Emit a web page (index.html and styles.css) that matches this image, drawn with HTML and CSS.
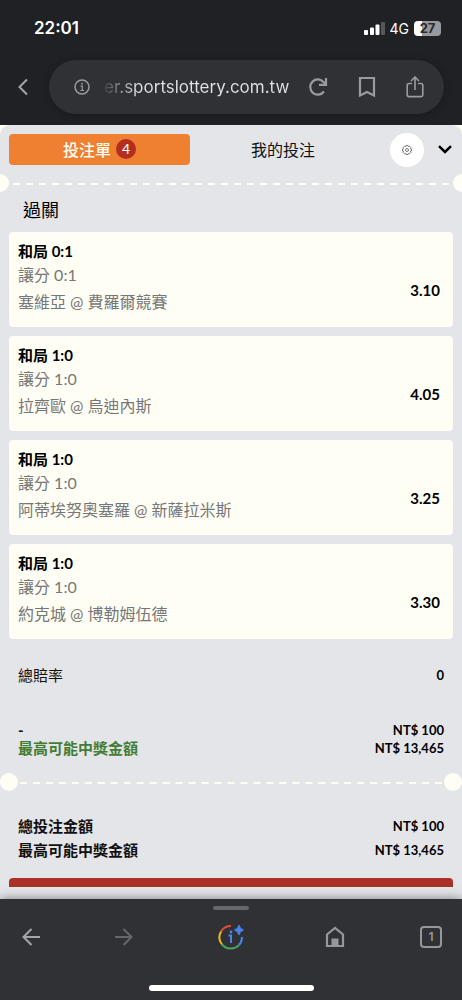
FILE: index.html
```html
<!DOCTYPE html>
<html lang="zh-Hant">
<head>
<meta charset="utf-8">
<meta name="viewport" content="width=device-width, initial-scale=1">
<title>投注單</title>
<link rel="stylesheet" href="styles.css">
</head>
<body>
<header class="browser-top">
  <div class="status">
    <span class="clock">22:01</span>
    <div class="status-right">
      <svg width="22" height="14" viewBox="0 0 22 14" aria-hidden="true"><g fill="#fff"><rect x="1" y="9" width="4" height="5" rx="1"/><rect x="7" y="6.500" width="4" height="7.500" rx="1"/><rect x="12.500" y="3.500" width="4" height="10.500" rx="1"/></g><rect x="18" y="1" width="4" height="13" rx="1" fill="#56575b"/></svg>
      <span class="network">4G</span>
      <span class="battery">27</span>
    </div>
  </div>
  <div class="address-row">
    <button class="icon-btn back" aria-label="返回"><svg width="12" height="18" viewBox="0 0 12 18"><path d="M10 1.500 2.500 9l7.500 7.500" fill="none" stroke="#a4a5aa" stroke-width="2"/></svg></button>
    <div class="address">
      <svg class="info" width="16" height="16" viewBox="0 0 16 16" aria-hidden="true"><circle cx="8" cy="8" r="7" fill="none" stroke="#9a9ba1" stroke-width="1.500"/><path d="M6.500 7.200H8.300v4.300M6.300 11.500h3.800" fill="none" stroke="#9a9ba1" stroke-width="1.200"/><circle cx="8" cy="4.700" r=".9" fill="#9a9ba1"/></svg>
      <span class="url">er.sportslottery.com.tw</span>
      <div class="address-actions">
        <button class="icon-btn" aria-label="重新整理"><svg width="20" height="20" viewBox="0 0 20 20"><path d="M16 14.500a7.600 7.600 0 1 1-.3-9.300L18 7.500" fill="none" stroke="#9a9ba1" stroke-width="2.200"/><path d="M18 1v6.800h-7" fill="none" stroke="#9a9ba1" stroke-width="2.200"/></svg></button>
        <button class="icon-btn" aria-label="書籤"><svg width="18" height="22" viewBox="0 0 18 22"><path d="M2 2h14v17.500l-7-3.500-7 3.500z" fill="none" stroke="#9a9ba1" stroke-width="2.200"/></svg></button>
        <button class="icon-btn" aria-label="分享"><svg width="18" height="22" viewBox="0 0 18 22"><path d="M6 7.500H3A1.800 1.800 0 0 0 1.200 9.300v9.500A1.800 1.800 0 0 0 3 20.600h12a1.800 1.800 0 0 0 1.800-1.800V9.300A1.800 1.800 0 0 0 15 7.500h-3M9 14V1.500M5 5l4-4 4 4" fill="none" stroke="#9a9ba1" stroke-width="1.600"/></svg></button>
      </div>
    </div>
  </div>
</header>

<main class="page">
  <div class="slip">
    <nav class="tabs">
      <button class="tab active">投注單<span class="count">4</span></button>
      <button class="tab">我的投注</button>
      <button class="settings" aria-label="設定"><svg width="10" height="10" viewBox="0 0 20 20"><g fill="none" stroke="#555" stroke-width="1.500"><path d="M8 1h4l.6 2.400 2.300-1.200 2.900 2.900-1.200 2.300L19 8v4l-2.400.6 1.200 2.300-2.900 2.900-2.300-1.200L12 19H8l-.6-2.400-2.300 1.200-2.900-2.900 1.200-2.300L1 12V8l2.400-.6-1.200-2.300 2.900-2.900 2.300 1.200z"/><circle cx="10" cy="10" r="3"/></g></svg></button>
      <button class="collapse" aria-label="收合"><svg width="14" height="9" viewBox="0 0 14 9"><path d="M1 1.200 7 7l6-5.800" fill="none" stroke="#000" stroke-width="2.500"/></svg></button>
    </nav>
    <div class="tear tear-edge"></div>
    <h1 class="title">過關</h1>
    <ul class="bets">
      <li class="bet"><div><h2>和局 0:1</h2><p class="market">讓分 0:1</p><p class="match">塞維亞 @ 費羅爾競賽</p></div><strong class="odds">3.10</strong></li>
      <li class="bet"><div><h2>和局 1:0</h2><p class="market">讓分 1:0</p><p class="match">拉齊歐 @ 烏迪內斯</p></div><strong class="odds">4.05</strong></li>
      <li class="bet"><div><h2>和局 1:0</h2><p class="market">讓分 1:0</p><p class="match">阿蒂埃努奧塞羅 @ 新薩拉米斯</p></div><strong class="odds">3.25</strong></li>
      <li class="bet"><div><h2>和局 1:0</h2><p class="market">讓分 1:0</p><p class="match">約克城 @ 博勒姆伍德</p></div><strong class="odds">3.30</strong></li>
    </ul>
    <dl class="sums">
      <div class="sum total-odds"><dt>總賠率</dt><dd>0</dd></div>
      <div class="sum stake"><dt>-</dt><dd>NT$ 100</dd></div>
      <div class="sum stake win"><dt>最高可能中獎金額</dt><dd>NT$ 13,465</dd></div>
    </dl>
    <div class="tear"></div>
    <dl class="sums totals">
      <div class="sum"><dt>總投注金額</dt><dd>NT$ 100</dd></div>
      <div class="sum"><dt>最高可能中獎金額</dt><dd>NT$ 13,465</dd></div>
    </dl>
    <div class="submit"></div>
  </div>
</main>

<footer class="browser-bottom">
  <div class="grip"></div>
  <nav class="tools">
    <button class="icon-btn" aria-label="上一頁"><svg width="18" height="18" viewBox="0 0 18 18"><path d="M18 9H2M9.500 1 1.500 9l8 8" fill="none" stroke="#a4a5aa" stroke-width="2"/></svg></button>
    <button class="icon-btn" aria-label="下一頁"><svg width="18" height="18" viewBox="0 0 18 18"><path d="M0 9h16M8.500 1l8 8-8 8" fill="none" stroke="#66676c" stroke-width="2"/></svg></button>
    <button class="icon-btn lens" aria-label="搜尋"><svg width="28" height="26" viewBox="0 0 28 26"><g fill="none" stroke-width="2"><path d="M4.100 7.500A11.500 11.500 0 0 1 14 2" stroke="#e34b3c"/><path d="M5 20.500A11.500 11.500 0 0 1 4.100 7.500" stroke="#f4bd24"/><path d="M22 21A11.500 11.500 0 0 1 5 20.500" stroke="#4ba558"/><path d="M25 13a11.500 11.500 0 0 1-3 8" stroke="#4b83ee"/><path d="M11.500 11.500h2.500V19" stroke="#4b83ee"/></g><circle cx="14" cy="8" r="1.400" fill="#4b83ee"/><path d="M22 1q.8 4 4.500 5-3.700 1-4.500 5-.8-4-4.500-5 3.700-1 4.500-5z" fill="#4b83ee" stroke="#4b83ee"/></svg></button>
    <button class="icon-btn" aria-label="首頁"><svg width="20" height="22" viewBox="0 0 20 22"><path d="M2 8.500 10 2l8 6.500V20H2z" fill="none" stroke="#96979d" stroke-width="2.200"/><path d="M6.500 20v-7.500h7V20z" fill="#96979d"/></svg></button>
    <button class="tab-count" aria-label="分頁">1</button>
  </nav>
  <div class="home-bar"></div>
</footer>
</body>
</html>
```
FILE: styles.css
```css
* {
  box-sizing: border-box;
  margin: 0;
  padding: 0;
}

body {
  min-height: 100vh;
  display: flex;
  flex-direction: column;
  background: #202125;
  color: #111;
  font-family: Lato, "Noto Sans CJK TC", sans-serif;
  font-size: 16px;
}

button {
  border: 0;
  background: none;
  font: inherit;
  color: inherit;
}

svg {
  display: block;
}

.browser-top {
  height: 125px;
  padding: 16px 18px 0 17px;
  background: #202125;
  font-family: Inter, sans-serif;
}

.status {
  display: flex;
  justify-content: space-between;
  align-items: center;
  height: 24px;
  padding: 0 3px 0 17px;
  color: #fff;
}

.clock {
  font-size: 17px;
  font-weight: 600;
}

.status-right {
  display: flex;
  align-items: center;
  gap: 5px;
}

.network {
  font-size: 14px;
}

.battery {
  width: 27px;
  height: 15px;
  border-radius: 4px;
  background: linear-gradient(90deg, #fff 8px, #98999d 8px);
  color: #292a2e;
  font-size: 13px;
  font-weight: 700;
  line-height: 15px;
  text-align: center;
}

.address-row {
  display: flex;
  align-items: center;
  gap: 20px;
  margin-top: 20px;
}

.address {
  flex: 1;
  min-width: 0;
  height: 54px;
  padding: 0 20px 0 25px;
  display: flex;
  align-items: center;
  gap: 14px;
  border-radius: 27px;
  background: #303135;
  box-shadow: 0 1px 6px #18191c;
}

.info {
  flex: none;
}

.url {
  font-size: 17px;
  white-space: nowrap;
  color: transparent;
  background: linear-gradient(90deg, #404145, #e2e3e6 34px);
  background-clip: text;
}

.address-actions {
  flex: 1;
  display: flex;
  align-items: center;
  justify-content: flex-end;
  gap: 30px;
}

.page {
  flex: 1;
  display: flex;
  background: #fefef4;
}

.slip {
  flex: 1;
  min-width: 0;
  border-radius: 10px 10px 0 0;
  background: #e4e5e8;
  overflow: hidden;
}

.tabs {
  display: grid;
  grid-template-columns: 181fr 186fr 48px 28px;
  align-items: center;
  justify-items: end;
  height: 49px;
  padding: 0 10px 0 9px;
}

.tab {
  width: 100%;
  height: 31px;
  padding-bottom: 1px;
  display: flex;
  align-items: center;
  justify-content: center;
  gap: 5px;
  border-radius: 4px;
}

.tab.active {
  background: #ef8031;
  color: #fefef4;
  font-weight: 500;
}

.count {
  width: 20px;
  height: 20px;
  border-radius: 50%;
  background: #b52d20;
  font-size: 14px;
  line-height: 20px;
  text-align: center;
}

.settings {
  width: 34px;
  height: 34px;
  display: grid;
  place-items: center;
  border-radius: 50%;
  background: #fff;
}

.tear {
  display: flex;
  align-items: center;
  justify-content: space-between;
  height: 18px;
  padding: 0 14px 0 20px;
  background: linear-gradient(90deg, #fefef4 7px, transparent 7px) 0 9px / 13px 2px round no-repeat;
  background-origin: content-box;
  background-clip: content-box;
}

.tear::before,
.tear::after {
  content: "";
  flex: none;
  width: 18px;
  height: 18px;
  border-radius: 50%;
  background: #fefef4;
}

.tear::before {
  margin-left: -20px;
}

.tear::after {
  margin-right: -14px;
}

.tear-edge {
  padding: 0 7px 0 13px;
}

.tear-edge::before {
  margin-left: -22px;
}

.tear-edge::after {
  margin-right: -16px;
}

.title {
  padding: 4px 23px 0;
  font-size: 18px;
  font-weight: 400;
  line-height: 28px;
  color: #000;
}

.bets {
  display: grid;
  gap: 9px;
  padding: 8px 9px 0;
  list-style: none;
}

.bet {
  display: flex;
  justify-content: space-between;
  align-items: center;
  min-height: 95px;
  padding: 8px 13px 13px 9px;
  border-radius: 4px;
  background: #fefef4;
}

.bet h2 {
  font-size: 15px;
  font-weight: 700;
  line-height: 23px;
  color: #000;
}

.market,
.match {
  color: #777;
  font-weight: 400;
  line-height: 24px;
}

.match {
  margin-top: 3px;
}

.odds {
  padding-top: 26px;
  font-size: 15px;
  font-weight: 700;
  line-height: 20px;
  color: #000;
}

.sums {
  padding: 0 18px;
}

.sum {
  display: flex;
  justify-content: space-between;
  align-items: center;
  line-height: 24px;
}

.sum dt {
  font-size: 15px;
  font-weight: 700;
}

.sum dd {
  font-size: 13px;
  font-weight: 700;
  color: #000;
}

.total-odds {
  margin: 24px 0 34px;
}

.total-odds dt {
  font-weight: 400;
}

.stake {
  line-height: 18px;
}

.win dt {
  color: #437c33;
}

.sums + .tear {
  margin-top: 16px;
}

.totals {
  padding-top: 23px;
}

.submit {
  height: 9px;
  margin: 16px 9px 0;
  border-radius: 4px 4px 0 0;
  background: #a93125;
}

.browser-bottom {
  height: 101px;
  padding: 7px 20px 9px;
  display: flex;
  flex-direction: column;
  align-items: center;
  background: #303135;
  box-shadow: 0 0 10px #77787c;
  font-family: Inter, sans-serif;
}

.grip {
  width: 36px;
  height: 4px;
  border-radius: 2px;
  background: #66676c;
}

.tools {
  align-self: stretch;
  display: flex;
  justify-content: space-between;
  align-items: center;
  height: 26px;
  margin-top: 14px;
  padding-left: 2px;
}

.lens {
  padding: 0 5px 0 8px;
}

.tab-count {
  width: 22px;
  height: 22px;
  border: 2px solid #96979d;
  border-radius: 4px;
  color: #96979d;
  font-size: 12px;
  font-weight: 600;
  line-height: 18px;
}

.home-bar {
  width: 165px;
  height: 6px;
  margin-top: auto;
  border-radius: 3px;
  background: #fff;
}
```
